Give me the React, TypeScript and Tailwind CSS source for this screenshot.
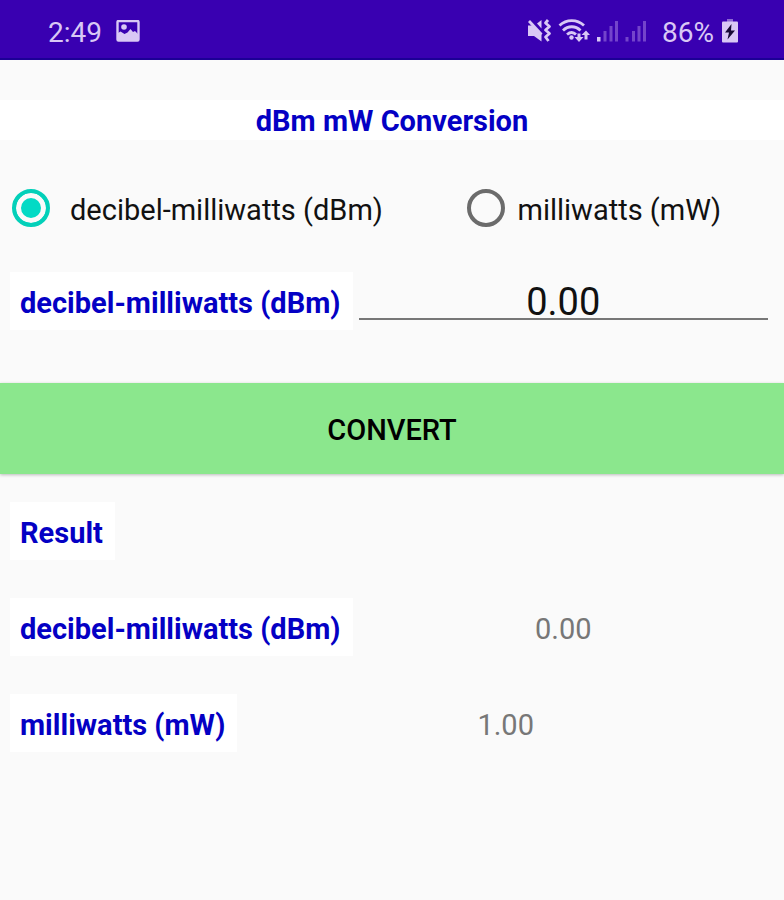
import React, { useState } from 'react';

const StatusBar = () => (
  <header className="flex h-[60px] items-center justify-between border-b-2 border-[#1c0096] bg-[#3900b1] pt-1 pr-[46px] pl-12 text-[#d9c8f5]">
    <div className="flex items-center gap-[14px]">
      <span className="pt-1 text-[28px] leading-8">2:49</span>
      <svg className="h-[23px] w-6" viewBox="0 0 24 23" fill="none">
        <rect x="1.5" y="1" width="21" height="19.5" rx="1" stroke="currentColor" strokeWidth="2.400" />
        <circle cx="8" cy="7" r="2.800" fill="currentColor" />
        <path d="M2 13l2.500-1.500 4 2.500 3-1.500 3-3.500 2.500 3 2-1 3 3V20.500H2z" fill="currentColor" />
      </svg>
    </div>
    <div className="flex items-center">
      <svg className="h-7 w-[122px]" viewBox="0 0 122 28" fill="none">
        {/* muted speaker with vibration waves */}
        <path d="M-.5 8.500h5L13.500 17v7.500L6 19H-.5z" fill="currentColor" />
        <path d="M9 6.500l4.500-3.500v8.500z" fill="currentColor" />
        <path d="M1 4l12.500 13.500" stroke="currentColor" strokeWidth="2.800" />
        <path d="M20 3l-2.500 3 4 3.500-4 3.500 4 3.500-4 3.500 3 4" stroke="currentColor" strokeWidth="2.800" strokeLinejoin="round" />
        {/* wifi with traffic arrows */}
        <path d="M31.500 8.500c7-6.500 17.500-6.500 24.500 0M35 13.500c5-5 12.500-5 17.500 0M39 17.500c3-2.500 6.500-2.500 9 0" stroke="currentColor" strokeWidth="2.800" />
        <circle cx="43.500" cy="20.500" r="2.200" fill="currentColor" />
        <path d="M49.500 16.500h3V20h3L51 25l-4.500-5h3z" fill="currentColor" />
        <path d="M56.500 22.500V18h-3l4.500-4.500 4 4.500h-2.500v4.500z" fill="currentColor" />
        {/* two SIM signals */}
        <path d="M69 20h3.500v4.500H69z" fill="currentColor" />
        <path d="M75.500 14h3v10.500h-3zM81.500 9h3v15.500h-3zM87 4h3v20.500h-3zM97.500 20h3v4.500h-3zM104 14h3v10.500h-3zM109.500 9h3v15.500h-3zM115 4h3v20.500h-3z" fill="#7444cb" />
      </svg>
      <span className="ml-3 pt-1 text-[28px] leading-8">86%</span>
      <svg className="ml-2 h-6 w-4" viewBox="0 0 16 24">
        <path d="M5 0h6v3H5z" fill="#8d68d3" />
        <rect y="2.500" width="16" height="21" rx="1" fill="currentColor" />
        <path d="M9.500 5L3 13.500h4L5.500 20.500 13 11.500H9z" fill="#170a35" />
      </svg>
    </div>
  </header>
);

const radioClass =
  'size-[38px] shrink-0 appearance-none rounded-full border-4 border-[#6b6b6b] checked:border-[#03d0b9] checked:bg-[#03dac5] checked:shadow-[inset_0_0_0_5px_#fafafa]';

const labelClass = 'bg-white pt-[14px] pr-3 pb-[10px] pl-[10px] text-[29px] leading-[34px] font-bold text-[#0400c4]';

const ResultRow = ({ label, value }: { label: string; value: string }) => (
  <div className="flex items-center">
    <span className={labelClass}>{label}</span>
    <output className="flex-1 pt-1 text-center text-[29px] leading-[34px] text-[#777]">{value}</output>
  </div>
);

export default function App() {
  const [unit, setUnit] = useState('dbm');
  const [input, setInput] = useState('0.00');
  const [result, setResult] = useState({ dbm: '0.00', mw: '1.00' });

  const convert = () => {
    const value = Number(input);
    const dbm = unit === 'dbm' ? value : 10 * Math.log10(value);
    const mw = unit === 'dbm' ? 10 ** (value / 10) : value;
    setResult({ dbm: dbm.toFixed(2), mw: mw.toFixed(2) });
  };

  return (
    <div className="min-h-screen bg-[#fafafa] font-[Roboto,sans-serif] text-[#111]">
      <StatusBar />
      <main className="pt-10">
        <h1 className="bg-white pt-[3px] pb-px text-center text-[29px] leading-9 font-bold text-[#0400c4]">dBm mW Conversion</h1>

        <div className="mt-12 grid grid-cols-[59fr_41fr] pl-3 text-[29px] leading-9">
          <label className="flex items-center gap-5">
            <input type="radio" name="unit" className={radioClass} checked={unit === 'dbm'} onChange={() => setUnit('dbm')} />
            <span className="pt-1">decibel-milliwatts (dBm)</span>
          </label>
          <label className="flex items-center gap-3">
            <input type="radio" name="unit" className={radioClass} checked={unit === 'mw'} onChange={() => setUnit('mw')} />
            <span className="pt-1">milliwatts (mW)</span>
          </label>
        </div>

        <div className="mt-11 flex items-center px-[10px]">
          <label htmlFor="amount" className={labelClass}>
            {unit === 'dbm' ? 'decibel-milliwatts (dBm)' : 'milliwatts (mW)'}
          </label>
          <input
            id="amount"
            type="text"
            inputMode="decimal"
            className="mx-[6px] h-[38px] min-w-0 flex-1 border-b-2 border-[#777] bg-transparent pt-1 text-center text-[38px] leading-8 outline-none"
            value={input}
            onChange={(e) => setInput(e.target.value)}
          />
        </div>

        <button
          type="button"
          className="mt-[53px] block h-[91px] w-full bg-[#8be78d] pt-1 text-[29px] font-medium text-black shadow-[0_1px_3px_rgba(0,0,0,0.25)]"
          onClick={convert}
        >
          CONVERT
        </button>

        <section className="mt-7 flex flex-col gap-[38px] px-[10px]">
          <h2 className={`${labelClass} self-start`}>Result</h2>
          <ResultRow label="decibel-milliwatts (dBm)" value={result.dbm} />
          <ResultRow label="milliwatts (mW)" value={result.mw} />
        </section>
      </main>
    </div>
  );
}
